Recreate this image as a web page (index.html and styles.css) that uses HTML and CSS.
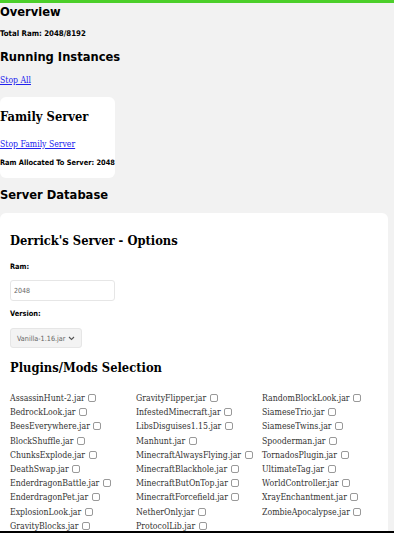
FILE: index.html
```html
<!DOCTYPE html>
<html lang="en">
<head>
    <meta charset="UTF-8">
    <meta name="viewport" content="width=device-width, initial-scale=1.0">
    <title>Server Panel</title>
    <link rel="stylesheet" href="styles.css">
</head>
<body>
    <h2 class="section-title first">Overview</h2>
    <p class="info total">Total Ram: 2048/8192</p>

    <h2 class="section-title running">Running Instances</h2>
    <a class="link" href="#">Stop All</a>

    <div class="card family">
        <h3 class="card-title">Family Server</h3>
        <a class="link" href="#">Stop Family Server</a>
        <p class="info">Ram Allocated To Server: 2048</p>
    </div>

    <h2 class="section-title database-title">Server Database</h2>

    <div class="card database">
        <h3 class="card-title">Derrick's Server - Options</h3>

        <label class="field-label" for="ram">Ram:</label>
        <input class="ram-input" type="text" id="ram" placeholder="2048">

        <label class="field-label" for="version">Version:</label>
        <div class="select" id="version">Vanilla-1.16.jar
            <svg width="7" height="5" viewBox="0 0 7 5"><path d="M1 1 L3.5 3.5 L6 1" fill="none" stroke="#555" stroke-width="1.1"/></svg>
        </div>

        <h3 class="card-title plugins-title">Plugins/Mods Selection</h3>
        <div class="plugin-grid">
            <label class="plugin">AssassinHunt-2.jar <span class="box"></span></label>
            <label class="plugin">GravityFlipper.jar <span class="box"></span></label>
            <label class="plugin">RandomBlockLook.jar <span class="box"></span></label>
            <label class="plugin">BedrockLook.jar <span class="box"></span></label>
            <label class="plugin">InfestedMinecraft.jar <span class="box"></span></label>
            <label class="plugin">SiameseTrio.jar <span class="box"></span></label>
            <label class="plugin">BeesEverywhere.jar <span class="box"></span></label>
            <label class="plugin">LibsDisguises1.15.jar <span class="box"></span></label>
            <label class="plugin">SiameseTwins.jar <span class="box"></span></label>
            <label class="plugin">BlockShuffle.jar <span class="box"></span></label>
            <label class="plugin">Manhunt.jar <span class="box"></span></label>
            <label class="plugin">Spooderman.jar <span class="box"></span></label>
            <label class="plugin">ChunksExplode.jar <span class="box"></span></label>
            <label class="plugin">MinecraftAlwaysFlying.jar <span class="box"></span></label>
            <label class="plugin">TornadosPlugin.jar <span class="box"></span></label>
            <label class="plugin">DeathSwap.jar <span class="box"></span></label>
            <label class="plugin">MinecraftBlackhole.jar <span class="box"></span></label>
            <label class="plugin">UltimateTag.jar <span class="box"></span></label>
            <label class="plugin">EnderdragonBattle.jar <span class="box"></span></label>
            <label class="plugin">MinecraftButOnTop.jar <span class="box"></span></label>
            <label class="plugin">WorldController.jar <span class="box"></span></label>
            <label class="plugin">EnderdragonPet.jar <span class="box"></span></label>
            <label class="plugin">MinecraftForcefield.jar <span class="box"></span></label>
            <label class="plugin">XrayEnchantment.jar <span class="box"></span></label>
            <label class="plugin">ExplosionLook.jar <span class="box"></span></label>
            <label class="plugin">NetherOnly.jar <span class="box"></span></label>
            <label class="plugin">ZombieApocalypse.jar <span class="box"></span></label>
            <label class="plugin">GravityBlocks.jar <span class="box"></span></label>
            <label class="plugin">ProtocolLib.jar <span class="box"></span></label>
        </div>
    </div>
</body>
</html>
```

FILE: styles.css
```css
* {
    margin: 0;
    padding: 0;
    box-sizing: border-box;
}

body {
    background-color: #f2f2f2;
    border-top: 3px solid #4ccf2a;
    border-bottom: 2px solid #000;
    font-family: 'DejaVu Sans Condensed', 'DejaVu Sans', sans-serif;
    color: #000;
    height: 533px;
    overflow: hidden;
}

.section-title {
    font-size: 12.8px;
    font-weight: bold;
    line-height: 18px;
}

.running {
    margin-top: 9px;
}

.database-title {
    margin-top: 8px;
}

.info {
    font-size: 7.4px;
    font-weight: bold;
    line-height: 10px;
    margin-top: 8px;
    white-space: nowrap;
}

.info.total {
    font-size: 7.8px;
}

.link {
    display: block;
    font-family: 'DejaVu Serif Condensed', 'DejaVu Serif', serif;
    font-size: 8.6px;
    line-height: 12px;
    color: #2222ee;
    margin-top: 8px;
}

.card {
    background-color: #ffffff;
    border-radius: 6px;
}

.family {
    width: 115px;
    margin-top: 11px;
    padding: 10px 0 10px;
}

.family .link {
    margin-top: 11px;
}

.card-title {
    font-family: 'DejaVu Serif Condensed', 'DejaVu Serif', serif;
    font-size: 12.8px;
    font-weight: bold;
    line-height: 20px;
}

.database {
    width: 388px;
    margin-top: 9px;
    padding: 18px 0 20px 10px;
}

.field-label {
    display: block;
    font-size: 7.4px;
    font-weight: bold;
    line-height: 10px;
    margin-top: 11px;
}

.ram-input {
    display: block;
    width: 105px;
    height: 21px;
    margin-top: 8px;
    margin-bottom: 8px;
    padding: 0 3px;
    border: 1px solid #e6e6e6;
    border-radius: 3px;
    font-family: 'DejaVu Sans Condensed', sans-serif;
    font-size: 7px;
    background: #fff;
}

.ram-input::placeholder {
    color: #666;
}

.ram-input + .field-label {
    margin-top: 0;
}

.select {
    display: flex;
    align-items: center;
    justify-content: space-between;
    width: 72px;
    height: 20px;
    padding: 0 6px;
    margin-top: 9px;
    background-color: #f3f3f3;
    border: 1px solid #e6e6e6;
    border-radius: 3px;
    font-size: 7.2px;
    color: #666;
}

.plugins-title {
    margin-top: 10px;
}

.plugin-grid {
    display: grid;
    grid-template-columns: repeat(3, 126px);
    margin-top: 13px;
}

.plugin {
    font-family: 'DejaVu Serif Condensed', 'DejaVu Serif', serif;
    font-size: 8.7px;
    line-height: 14.2px;
    color: #333;
    white-space: nowrap;
}

.box {
    display: inline-block;
    width: 8px;
    height: 8px;
    margin-left: 1px;
    border: 1px solid #999;
    border-radius: 2px;
    vertical-align: -1px;
}
```
